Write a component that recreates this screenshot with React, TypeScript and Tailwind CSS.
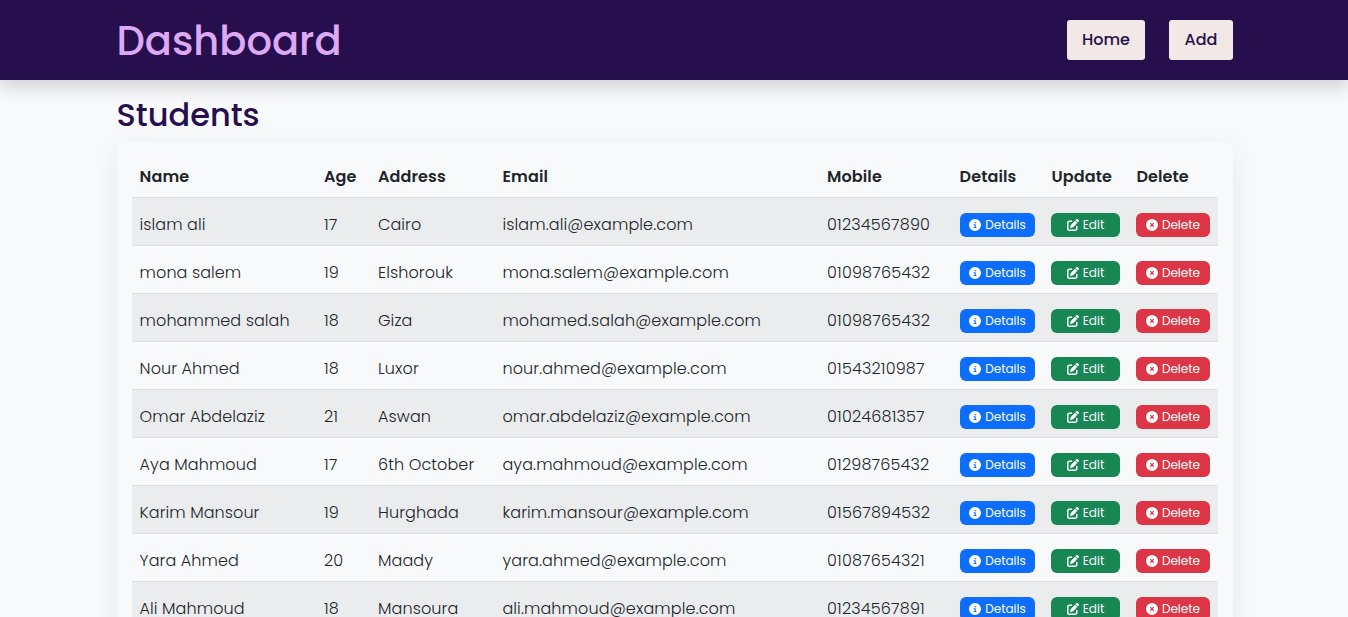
import { FaCircleInfo, FaPenToSquare, FaCircleXmark } from "react-icons/fa6";

const students = [
  ["islam ali", "17", "Cairo", "islam.ali@example.com", "01234567890"],
  ["mona salem", "19", "Elshorouk", "mona.salem@example.com", "01098765432"],
  ["mohammed salah", "18", "Giza", "mohamed.salah@example.com", "01098765432"],
  ["Nour Ahmed", "18", "Luxor", "nour.ahmed@example.com", "01543210987"],
  ["Omar Abdelaziz", "21", "Aswan", "omar.abdelaziz@example.com", "01024681357"],
  ["Aya Mahmoud", "17", "6th October", "aya.mahmoud@example.com", "01298765432"],
  ["Karim Mansour", "19", "Hurghada", "karim.mansour@example.com", "01567894532"],
  ["Yara Ahmed", "20", "Maady", "yara.ahmed@example.com", "01087654321"],
  ["Ali Mahmoud", "18", "Mansoura", "ali.mahmoud@example.com", "01234567891"],
];

const cellSpacing = [
  "pl-[7.6px] tracking-[0.08px]",
  "pl-2 tracking-[0.1px]",
  "pl-2 tracking-[0.1px]",
  "pl-[8.4px] tracking-[0.13px]",
  "pl-2 tracking-[0.18px]",
];

const headings = [
  { label: "Name", pad: "pl-[7.6px]" },
  { label: "Age", pad: "pl-2" },
  { label: "Address", pad: "pl-2" },
  { label: "Email", pad: "pl-[8.4px]" },
  { label: "Mobile", pad: "pl-2" },
  { label: "Details", pad: "pl-[7.6px]" },
  { label: "Update", pad: "pl-[8.5px]" },
  { label: "Delete", pad: "pl-[8.4px]" },
];

const button = "flex h-6 items-center justify-center gap-1 rounded-md text-[12px] font-normal text-white";

export default function App() {
  return (
    <div className="h-[617px] overflow-hidden bg-[#f8f9fb] font-[Poppins,sans-serif] text-[#212529]">
      <header className="relative flex h-20 items-center justify-between bg-[#260f4c] pr-[115px] pl-[116.5px] shadow-[0_8px_16px_rgba(0,0,0,0.15)]">
        <h1 className="pt-px text-[40px] leading-[48px] font-medium text-[#dda9f4]">Dashboard</h1>
        <nav className="flex gap-6 font-medium text-[#260f4c]">
          <a className="flex h-10 w-[78px] items-center justify-center rounded-[3px] bg-[#f2e8e5]">Home</a>
          <a className="flex h-10 w-16 items-center justify-center rounded-[3px] bg-[#f2e8e5]">Add</a>
        </nav>
      </header>
      <main className="pt-4 pr-[115px] pl-[117px]">
        <h2 className="-ml-[0.5px] mb-2 text-[32px] leading-[38px] font-medium text-[#260f4c]">Students</h2>
        <section className="rounded-md bg-[#f8f9fb] px-[15px] pt-3.5 shadow-[0_8px_30px_rgba(0,0,0,0.07)]">
          <table className="w-[1086px] table-fixed border-collapse text-left">
            <colgroup>
              <col className="w-[184px]" />
              <col className="w-[54px]" />
              <col className="w-[124px]" />
              <col className="w-[325px]" />
              <col className="w-[133px]" />
              <col className="w-[91px]" />
              <col className="w-[85px]" />
              <col className="w-[90px]" />
            </colgroup>
            <thead>
              <tr className="h-[41px] border-b border-[#dee2e6]">
                {headings.map(({ label, pad }) => (
                  <th key={label} className={`pr-2 pt-0.5 font-semibold tracking-[0.12px] ${pad}`}>{label}</th>
                ))}
              </tr>
            </thead>
            <tbody>
              {students.map((s) => (
                <tr key={s[0]} className="h-12 border-b border-[#dee2e6] font-light odd:bg-[#ebecee]">
                  {s.map((v, i) => (
                    <td key={i} className={`pr-2 pt-2 whitespace-nowrap ${cellSpacing[i]}`}>{v}</td>
                  ))}
                  <td className="px-2 pt-[7px]">
                    <div className={`${button} bg-[#0d6efd]`}><FaCircleInfo />Details</div>
                  </td>
                  <td className="px-2 pt-[7px]">
                    <div className={`${button} bg-[#198754]`}><FaPenToSquare />Edit</div>
                  </td>
                  <td className="px-2 pt-[7px]">
                    <div className={`${button} bg-[#dc3545]`}><FaCircleXmark />Delete</div>
                  </td>
                </tr>
              ))}
            </tbody>
          </table>
        </section>
      </main>
    </div>
  );
}
